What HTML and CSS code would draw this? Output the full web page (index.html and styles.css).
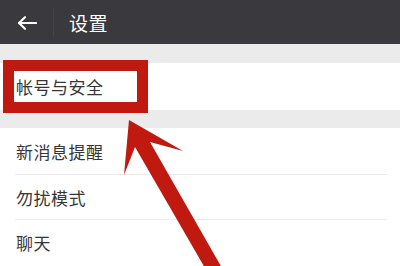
FILE: index.html
```html
<!DOCTYPE html>
<html lang="zh-CN">
<head>
<meta charset="utf-8">
<link rel="stylesheet" href="styles.css">
</head>
<body>
<div class="page">
  <header class="topbar">
    <span class="back">
      <svg width="20" height="14" viewBox="0 0 20 14"><path d="M19 7H2.5M8 1.2L2 7l6 5.8" fill="none" stroke="#fff" stroke-width="2.2" stroke-linecap="round" stroke-linejoin="round"/></svg>
    </span>
    <span class="divider"></span>
    <h1 class="title">设置</h1>
  </header>
  <div class="gap gap-top"></div>
  <div class="group">
    <div class="row row-tall">帐号与安全</div>
  </div>
  <div class="gap"></div>
  <div class="group">
    <div class="row">新消息提醒</div>
    <div class="row">勿扰模式</div>
    <div class="row">聊天</div>
  </div>
  <div class="highlight"></div>
  <svg class="pointer" width="400" height="266" viewBox="0 0 400 266">
    <polygon points="129,120 183,151 150,142 222,268 205,268 135,147 124,175" fill="#c01a10"/>
  </svg>
</div>
</body>
</html>
```
FILE: styles.css
```css
* { box-sizing: border-box; margin: 0; padding: 0; }
html, body { width: 400px; height: 266px; overflow: hidden; background: #fff; }
body { font-family: "Noto Sans CJK SC", "Noto Sans", sans-serif; color: #363636; }
.page { position: relative; width: 400px; height: 266px; overflow: hidden; }
.topbar {
  height: 44px;
  background: #39393e;
  display: flex;
  align-items: center;
}
.back { width: 53px; display: flex; justify-content: center; padding-left: 1px; padding-top: 2px; }
.back svg { display: block; }
.divider { width: 1px; height: 30px; background: #444449; }
.title {
  margin-left: 15px;
  font-size: 19px;
  font-weight: 400;
  color: #fff;
  letter-spacing: 0.5px;
  line-height: 1;
  padding-top: 1px;
}
.gap { height: 18px; background: #ebebeb; }
.gap-top { height: 19px; }
.group { background: #fff; }
.row {
  height: 45px;
  margin-left: 15px;
  margin-right: 13px;
  display: flex;
  align-items: center;
  font-size: 17px;
  letter-spacing: 0.5px;
  border-top: 1px solid #ececec;
  padding-left: 1px;
}
.row:first-child { border-top: none; height: 46px; }
.row-tall { height: 47px !important; }
.highlight {
  position: absolute;
  left: 3px;
  top: 60px;
  width: 145px;
  height: 53px;
  border: 11px solid #c01a10;
}
.pointer { position: absolute; left: 0; top: 0; }
```
